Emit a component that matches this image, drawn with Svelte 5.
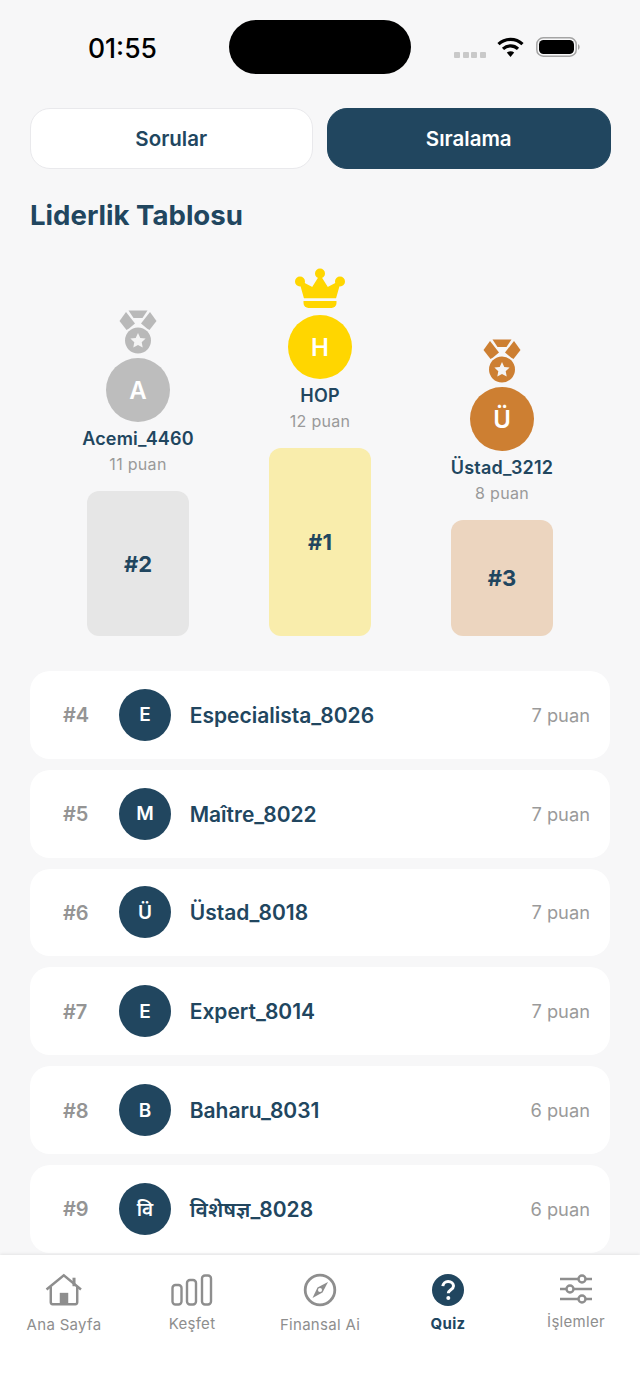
<script>
  const podium = [
    { key: 'silver', letter: 'A', name: 'Acemi_4460', pts: '11 puan', rank: '#2', medal: '#b9b9b9', bar: 'b2' },
    { key: 'gold', letter: 'H', name: 'HOP', pts: '12 puan', rank: '#1', medal: '', bar: 'b1' },
    { key: 'bronze', letter: 'Ü', name: 'Üstad_3212', pts: '8 puan', rank: '#3', medal: '#cd7f32', bar: 'b3' }
  ];
  const rows = [
    ['#4', 'E', 'Especialista_8026', '7 puan'],
    ['#5', 'M', 'Maître_8022', '7 puan'],
    ['#6', 'Ü', 'Üstad_8018', '7 puan'],
    ['#7', 'E', 'Expert_8014', '7 puan'],
    ['#8', 'B', 'Baharu_8031', '6 puan'],
    ['#9', 'वि', 'विशेषज्ञ_8028', '6 puan']
  ];
</script>

<div class="screen">
  <div class="main">
    <header class="status">
      <span class="time">01:55</span>
      <div class="island"></div>
      <div class="sys">
        <div class="dots"><i></i><i></i><i></i><i></i></div>
        <svg class="wifi" width="27" height="20" viewBox="0 0 27 20">
          <path d="M1.500 7.200A17.500 17.500 0 0 1 25.500 7.200" fill="none" stroke="#000" stroke-width="3.200"/>
          <path d="M6 11.800A11 11 0 0 1 21 11.800" fill="none" stroke="#000" stroke-width="3.200"/>
          <path d="M9.800 15.600 13.500 20 17.200 15.600A5.500 5.500 0 0 0 9.800 15.600Z" fill="#000"/>
        </svg>
        <svg class="batt" width="45" height="20" viewBox="0 0 45 20">
          <rect x="0.800" y="0.800" width="39.400" height="18.400" rx="6.500" fill="none" stroke="#a4a4a4" stroke-width="1.500"/>
          <rect x="3" y="3" width="35" height="14" rx="4.600" fill="#000"/>
          <path d="M42 7a3.500 3.500 0 0 1 0 6Z" fill="#a4a4a4"/>
        </svg>
      </div>
    </header>

    <div class="tabs">
      <div class="tab">Sorular</div>
      <div class="tab on">Sıralama</div>
    </div>

    <h1>Liderlik Tablosu</h1>

    <div class="podium">
      {#each podium as p}
        <div class="col {p.key}">
          {#if p.key === 'gold'}
            <svg class="crown" width="52" height="42" viewBox="0 0 52 42">
              <circle cx="26" cy="5.500" r="5" fill="#ffd600"/>
              <circle cx="6" cy="13.500" r="5" fill="#ffd600"/>
              <circle cx="46" cy="13.500" r="5" fill="#ffd600"/>
              <path d="M26 8 33.500 20 46 13.500 41.500 29.500H10.500L6 13.500 18.500 20Z" fill="#ffd600" stroke="#ffd600" stroke-linejoin="round" stroke-width="1.500"/>
              <path d="M9.500 33H42.500V35A5 5 0 0 1 37.500 40H14.500A5 5 0 0 1 9.500 35Z" fill="#ffd600"/>
            </svg>
          {:else}
            <svg class="medal" width="40" height="44" viewBox="0 0 40 44">
              <path d="M10.500 0.500H29.500L24.500 8H15.500Z" fill={p.medal}/>
              <path d="M8 2 17 13.500 11 18.500 8.500 20 1.500 11Z" fill={p.medal}/>
              <path d="M32 2 23 13.500 29 18.500 31.500 20 38.500 11Z" fill={p.medal}/>
              <circle cx="20" cy="30.500" r="13" fill={p.medal}/>
              <path d="M20 23l2.300 4.900 5.300.7-3.900 3.700 1 5.300-4.700-2.600-4.700 2.600 1-5.300-3.900-3.700 5.300-.7Z" fill="#f4f4f4"/>
            </svg>
          {/if}
          <div class="ava">{p.letter}</div>
          <div class="pname">{p.name}</div>
          <div class="ppts">{p.pts}</div>
          <div class="bar {p.bar}">{p.rank}</div>
        </div>
      {/each}
    </div>

    <div class="list">
      {#each rows as r}
        <div class="row">
          <span class="rank">{r[0]}</span>
          <span class="rava">{r[1]}</span>
          <span class="rname">{r[2]}</span>
          <span class="rpts">{r[3]}</span>
        </div>
      {/each}
    </div>
  </div>

  <nav class="nav">
    <div class="item">
      <svg width="40" height="36" viewBox="0 0 40 36">
        <path d="M1.500 17.500 19.800 2.500 38 17.500" fill="none" stroke="#8e8e8e" stroke-width="2.600"/>
        <path d="M6 14.500V31A2 2 0 0 0 8 33H32A2 2 0 0 0 34 31V14.500" fill="none" stroke="#8e8e8e" stroke-width="2.600"/>
        <path d="M15.500 21H24.500V32H15.500Z" fill="#8e8e8e"/>
        <rect x="29" y="5" width="3.200" height="9" fill="#8e8e8e"/>
      </svg>
      <span>Ana Sayfa</span>
    </div>
    <div class="item kes">
      <svg width="42" height="32" viewBox="0 0 42 32">
        <rect x="1.500" y="11" width="9" height="19.500" rx="3" fill="none" stroke="#8e8e8e" stroke-width="2.400"/>
        <rect x="16" y="6" width="9" height="24.500" rx="3" fill="none" stroke="#8e8e8e" stroke-width="2.400"/>
        <rect x="31" y="1.500" width="9" height="29" rx="3" fill="none" stroke="#8e8e8e" stroke-width="2.400"/>
      </svg>
      <span>Keşfet</span>
    </div>
    <div class="item">
      <svg width="34" height="34" viewBox="0 0 34 34">
        <circle cx="17" cy="17" r="14.800" fill="none" stroke="#8e8e8e" stroke-width="2.800"/>
        <path d="M25 9 19.500 19.500 9.500 25 14.500 14.500Z" fill="#8e8e8e"/>
        <circle cx="17" cy="17" r="2" fill="#fff"/>
      </svg>
      <span>Finansal Ai</span>
    </div>
    <div class="item active">
      <svg width="34" height="34" viewBox="0 0 34 34">
        <circle cx="17" cy="17" r="16" fill="#21465f"/>
        <path d="M11.800 13.200A5.300 5.300 0 0 1 17.100 8.500C20.300 8.500 22.500 10.500 22.500 13.100 22.500 16.700 17.300 16.800 17.300 20.300" fill="none" stroke="#fff" stroke-width="3"/>
        <circle cx="17.300" cy="25" r="2" fill="#fff"/>
      </svg>
      <span>Quiz</span>
    </div>
    <div class="item isl">
      <svg width="34" height="32" viewBox="0 0 34 32">
        <g stroke="#8e8e8e" stroke-width="2.400">
          <path d="M1 5H19M27 5H33M1 15H7M15 15H33M1 25H19M27 25H33"/>
          <circle cx="23" cy="5" r="3.500" fill="#fff"/>
          <circle cx="11" cy="15" r="3.500" fill="#fff"/>
          <circle cx="23" cy="25" r="3.500" fill="#fff"/>
        </g>
      </svg>
      <span>İşlemler</span>
    </div>
  </nav>
</div>

<style>
  :global(body) {
    margin: 0;
    background: #f7f7f8;
  }
  .screen {
    width: 640px;
    height: 1390px;
    display: flex;
    flex-direction: column;
    overflow: hidden;
    background: #f7f7f8;
    font-family: Inter, "Noto Sans", "Noto Sans Devanagari", sans-serif;
    color: #21465f;
  }
  .main {
    flex: 1;
    min-height: 0;
    overflow: hidden;
    padding: 0 30px;
  }
  .status {
    height: 108px;
    margin: 0 -30px;
    display: flex;
    align-items: flex-start;
    position: relative;
  }
  .time {
    margin: 33px 0 0 88px;
    font-size: 26.500px;
    line-height: 30px;
    font-weight: 500;
    color: #000;
  }
  .island {
    position: absolute;
    left: 229px;
    top: 20px;
    width: 182px;
    height: 54px;
    border-radius: 27px;
    background: #000;
  }
  .sys {
    position: absolute;
    left: 454px;
    top: 37px;
    display: flex;
    align-items: flex-start;
  }
  .dots {
    display: flex;
    gap: 2.700px;
    margin-top: 15px;
  }
  .dots i {
    width: 6px;
    height: 5.500px;
    border-radius: 1px;
    background: #c9c9c9;
  }
  .wifi {
    margin-left: 11px;
  }
  .batt {
    margin-left: 12px;
  }
  .tabs {
    display: flex;
    gap: 14px;
    margin: 0 -0.500px;
  }
  .tab {
    flex: 1;
    height: 60.500px;
    box-sizing: border-box;
    border: 1px solid #e9e9ec;
    border-radius: 20px;
    background: #fff;
    display: flex;
    align-items: center;
    justify-content: center;
    font-size: 20.500px;
    font-weight: 600;
  }
  .tab.on {
    background: #21465f;
    border-color: #21465f;
    color: #fff;
  }
  h1 {
    margin: 29px 0 0;
    font-size: 27.600px;
    line-height: 34px;
    font-weight: 700;
  }
  .podium {
    height: 404.500px;
    display: flex;
    justify-content: center;
    align-items: flex-end;
  }
  .col {
    width: 182px;
    display: flex;
    flex-direction: column;
    align-items: center;
  }
  .crown { display: block; margin-bottom: 5px; }
  .medal { display: block; margin-bottom: 4px; }
  .ava {
    width: 64px;
    height: 64px;
    border-radius: 50%;
    display: flex;
    align-items: center;
    justify-content: center;
    color: #fff;
    font-size: 24px;
    font-weight: 600;
  }
  .silver .ava { background: #bdbdbd; }
  .gold .ava { background: #ffd600; }
  .bronze .ava { background: #cd7f32; }
  .pname {
    margin-top: 6px;
    font-size: 18px;
    line-height: 21px;
    font-weight: 600;
    letter-spacing: 0.2px;
  }
  .ppts {
    margin-top: 5px;
    font-size: 16px;
    line-height: 20px;
    letter-spacing: 0.3px;
    color: #9a9a9a;
  }
  .bar {
    width: 102px;
    margin-top: 17px;
    border-radius: 12px;
    display: flex;
    align-items: center;
    justify-content: center;
    font-size: 22px;
    font-weight: 700;
  }
  .b1 { height: 188px; background: #f9edac; }
  .b2 { height: 145px; background: #e6e6e6; }
  .b3 { height: 116px; background: #ecd5bf; }
  .list {
    margin-top: 35px;
    display: flex;
    flex-direction: column;
    gap: 11px;
  }
  .row {
    height: 87.800px;
    flex: none;
    display: flex;
    align-items: center;
    background: #fff;
    border-radius: 20px;
    padding: 0 20px 0 33px;
  }
  .rank {
    width: 56px;
    padding-top: 1px;
    font-size: 20px;
    font-weight: 600;
    color: #949494;
  }
  .rava {
    width: 52px;
    height: 52px;
    border-radius: 50%;
    background: #21465f;
    color: #fff;
    display: flex;
    align-items: center;
    justify-content: center;
    font-size: 19px;
    font-weight: 600;
  }
  .rname {
    margin-left: 18.700px;
    padding-top: 1px;
    flex: 1;
    font-size: 21px;
    font-weight: 600;
  }
  .rpts {
    font-size: 18.300px;
    color: #9a9a9a;
  }
  .nav {
    flex: none;
    height: 135px;
    background: #fff;
    box-shadow: 0 -1px 3px rgba(0, 0, 0, 0.08);
    position: relative;
    display: flex;
    align-items: flex-start;
    padding-top: 18px;
    box-sizing: border-box;
  }
  .item {
    width: 128px;
    display: flex;
    flex-direction: column;
    align-items: center;
    color: #8e8e8e;
    font-size: 15px;
    line-height: 20px;
  }
  .item svg { height: 34px; }
  .item span { margin-top: 8px; letter-spacing: 0.3px; }
  .item.kes span { margin-top: 7px; }
  .item.isl span { margin-top: 5px; }
  .item.active span { margin-top: 7px; }
  .item.active { color: #21465f; font-weight: 700; }
</style>
